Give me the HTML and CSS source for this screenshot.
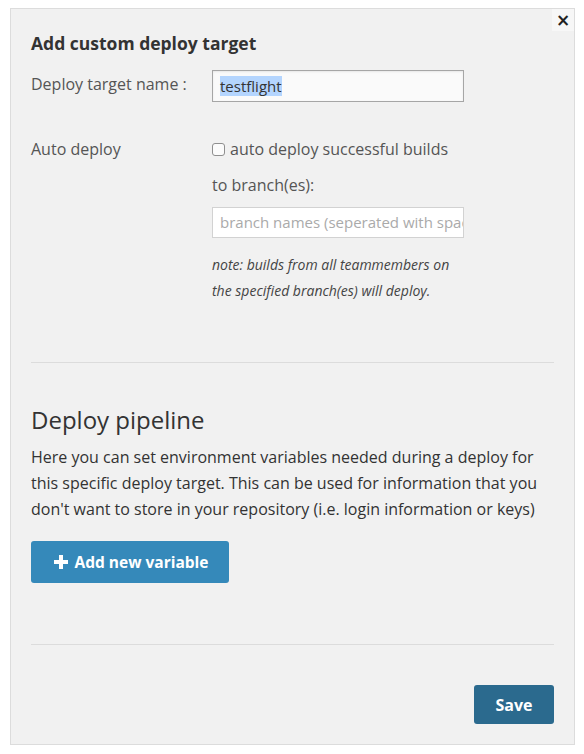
FILE: index.html
```html
<!DOCTYPE html>
<html>
<head>
<meta charset="utf-8">
<link rel="stylesheet" href="styles.css">
</head>
<body>
<div class="modal">
  <button class="close" aria-label="close">&#xd7;</button>
  <h3 class="title">Add custom deploy target</h3>
  <div class="row row-name">
    <label class="label">Deploy target name :</label>
    <div class="field"><div class="input"><span class="sel">testflight</span></div></div>
  </div>
  <div class="row row-auto">
    <div class="label">Auto deploy</div>
    <div class="field">
      <div class="check"><span class="box"></span>auto deploy successful builds</div>
      <div class="branch-label">to branch(es):</div>
      <div class="input placeholder">branch names (seperated with spaces)</div>
      <p class="note">note: builds from all teammembers on<br>the specified branch(es) will deploy.</p>
    </div>
  </div>
  <hr class="sep sep1">
  <h2 class="heading">Deploy pipeline</h2>
  <p class="desc">Here you can set environment variables needed during a deploy for this specific deploy target. This can be used for information that you don't want to store in your repository (i.e. login information or keys)</p>
  <button class="btn-add"><svg class="plus" viewBox="0 0 14 14" width="14" height="14"><path d="M5 0h4v5h5v4H9v5H5V9H0V5h5z" fill="#fff"/></svg>Add new variable</button>
  <hr class="sep sep2">
  <div class="footer"><button class="btn-save">Save</button></div>
</div>
</body>
</html>
```
FILE: styles.css
```css
html, body { margin: 0; padding: 0; background: #fff; }
body { font-family: "Open Sans", "Liberation Sans", sans-serif; color: #555; }
.modal {
  position: relative;
  box-sizing: border-box;
  margin: 8px 9px 0 10px;
  width: 565px;
  height: 737px;
  background: #f1f1f1;
  border: 1px solid #dcdcdc;
  padding: 0 20px 0 20px;
}
.close {
  position: absolute;
  right: 0; top: 0;
  width: 22px; height: 22px;
  border: none;
  background: #f7f7f7;
  color: #222;
  font-size: 17px;
  font-weight: 700;
  padding: 0;
  line-height: 20px;
  font-family: "DejaVu Sans", sans-serif;
}
.title {
  margin: 0;
  padding-top: 22px;
  font-size: 17.5px;
  font-weight: 700;
  color: #333;
  line-height: 24px;
}
.row { display: flex; }
.label { width: 181px; flex: none; font-size: 16px; color: #555; }
.row-name { margin-top: 15px; align-items: center; }
.row-name .label { padding-bottom: 4px; }
.field { width: 252px; }
.input {
  box-sizing: border-box;
  height: 32px;
  width: 252px;
  background: #fafafa;
  border: 1px solid #a6a6a6;
  box-shadow: inset 0 1px 2px rgba(0,0,0,0.08);
  font-size: 15px;
  line-height: 30px;
  padding-left: 7px;
  color: #333;
  white-space: nowrap;
  overflow: hidden;
}
.sel { background: #b4d5fe; }
.row-auto { margin-top: 34px; }
.row-auto .label { line-height: 26px; }
.check { font-size: 16px; line-height: 26px; display: flex; align-items: center; white-space: nowrap; }
.box {
  display: inline-block;
  box-sizing: border-box;
  width: 13px; height: 13px;
  border: 1px solid #8f8f8f;
  border-radius: 3px;
  background: #fbfbfb;
  margin-right: 5px;
  margin-top: 1px;
}
.branch-label { font-size: 16px; line-height: 26px; margin-top: 10px; }
.placeholder {
  margin-top: 9px;
  height: 31px;
  background: #fff;
  border: 1px solid #d2d2d2;
  box-shadow: none;
  color: #aaa;
  font-size: 15px;
  line-height: 29px;
}
.note {
  margin: 14px 0 0 0;
  font-size: 14px;
  font-style: italic;
  line-height: 26px;
  color: #444;
}
.sep { border: none; border-top: 1px solid #dcdcdc; margin: 0; }
.sep1 { margin-top: 58px; }
.heading {
  margin: 40px 0 0 0;
  font-size: 24px;
  font-weight: 400;
  color: #333;
  line-height: 34px;
}
.desc {
  margin: 7px 0 0 0;
  font-size: 16px;
  line-height: 26px;
  color: #333;
}
.btn-add {
  margin-top: 19px;
  display: flex;
  align-items: center;
  justify-content: center;
  width: 198px;
  height: 42px;
  border: none;
  border-radius: 3px;
  background: #3589ba;
  color: #fff;
  font-family: "Open Sans", "Liberation Sans", sans-serif;
  font-size: 15.5px;
  font-weight: 700;
  padding: 0 0 0 2px;
}
.plus { margin-right: 7px; }
.sep2 { margin-top: 61px; }
.footer { display: flex; justify-content: flex-end; margin-top: 40px; }
.btn-save {
  width: 80px;
  height: 39px;
  border: none;
  border-radius: 3px;
  background: #2b6a8e;
  color: #fff;
  font-family: "Open Sans", "Liberation Sans", sans-serif;
  font-size: 16px;
  font-weight: 700;
  padding: 0;
}
```
